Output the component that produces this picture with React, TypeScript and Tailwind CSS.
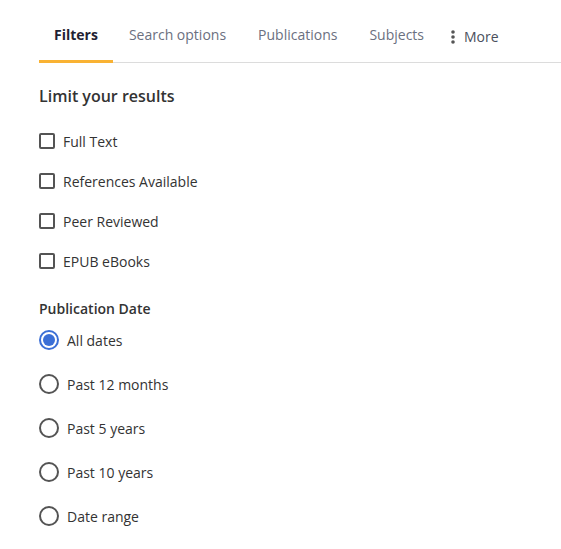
import { useState } from "react";

const tabs = ["Filters", "Search options", "Publications", "Subjects"];
const limits = ["Full Text", "References Available", "Peer Reviewed", "EPUB eBooks"];
const dates = ["All dates", "Past 12 months", "Past 5 years", "Past 10 years", "Date range"];

export default function App() {
  const [checked, setChecked] = useState<string[]>([]);
  const [date, setDate] = useState("All dates");

  return (
    <div className="min-h-[549px] bg-white pl-[39px] text-[#333] [font-family:'Open_Sans',sans-serif]">
      <nav className="flex items-stretch border-b border-[#dcdcdc] pt-[21px]">
        {tabs.map((t, i) => (
          <button
            key={t}
            type="button"
            className={
              i === 0
                ? "-mb-px border-b-[3px] border-[#f9b233] px-[15px] pb-[11px] text-[14px] font-bold leading-[28px] text-[#1f2233]"
                : "-mb-px border-b-[3px] border-transparent px-4 pb-[11px] text-[14px] leading-[28px] text-[#6b7080]"
            }
          >
            {t}
          </button>
        ))}
        <button
          type="button"
          className="-mb-px flex items-center gap-[9px] border-b-[3px] border-transparent pl-[11px] pb-[9px] pt-[2px] text-[14px] leading-[28px] text-[#4a4f5c]"
        >
          <svg width="4" height="14" viewBox="0 0 4 14" fill="#555">
            <circle cx="2" cy="2" r="1.8" />
            <circle cx="2" cy="7" r="1.8" />
            <circle cx="2" cy="12" r="1.8" />
          </svg>
          More
        </button>
      </nav>

      <h2 className="mt-[21px] text-[16px] font-semibold leading-[24px] text-[#333]">
        Limit your results
      </h2>

      <div className="mt-[22px] flex flex-col gap-[18px]">
        {limits.map((l) => {
          const on = checked.includes(l);
          return (
            <label key={l} className="flex h-[22px] cursor-pointer items-center gap-[8px] text-[14px]">
              <span
                className={
                  on
                    ? "flex h-[16px] w-[16px] items-center justify-center rounded-[2px] border-2 border-[#3b6fd6] bg-[#3b6fd6]"
                    : "h-[16px] w-[16px] rounded-[2px] border-2 border-[#545454] bg-white"
                }
                onClick={() =>
                  setChecked(on ? checked.filter((c) => c !== l) : [...checked, l])
                }
              />
              <span className="text-[#333]">{l}</span>
            </label>
          );
        })}
      </div>

      <h3 className="mt-[26px] text-[14px] font-semibold leading-[22px] text-[#333]">
        Publication Date
      </h3>

      <div className="mt-[9px] flex flex-col gap-[22px]">
        {dates.map((d) => {
          const on = date === d;
          return (
            <label
              key={d}
              className="flex h-[22px] cursor-pointer items-center gap-[8px] text-[14px]"
              onClick={() => setDate(d)}
            >
              <span
                className={
                  on
                    ? "flex h-[20px] w-[20px] items-center justify-center rounded-full border-2 border-[#3b6fd6]"
                    : "h-[20px] w-[20px] rounded-full border-2 border-[#545454]"
                }
              >
                {on && <span className="h-[12px] w-[12px] rounded-full bg-[#3b6fd6]" />}
              </span>
              <span className="text-[#333]">{d}</span>
            </label>
          );
        })}
      </div>
    </div>
  );
}
